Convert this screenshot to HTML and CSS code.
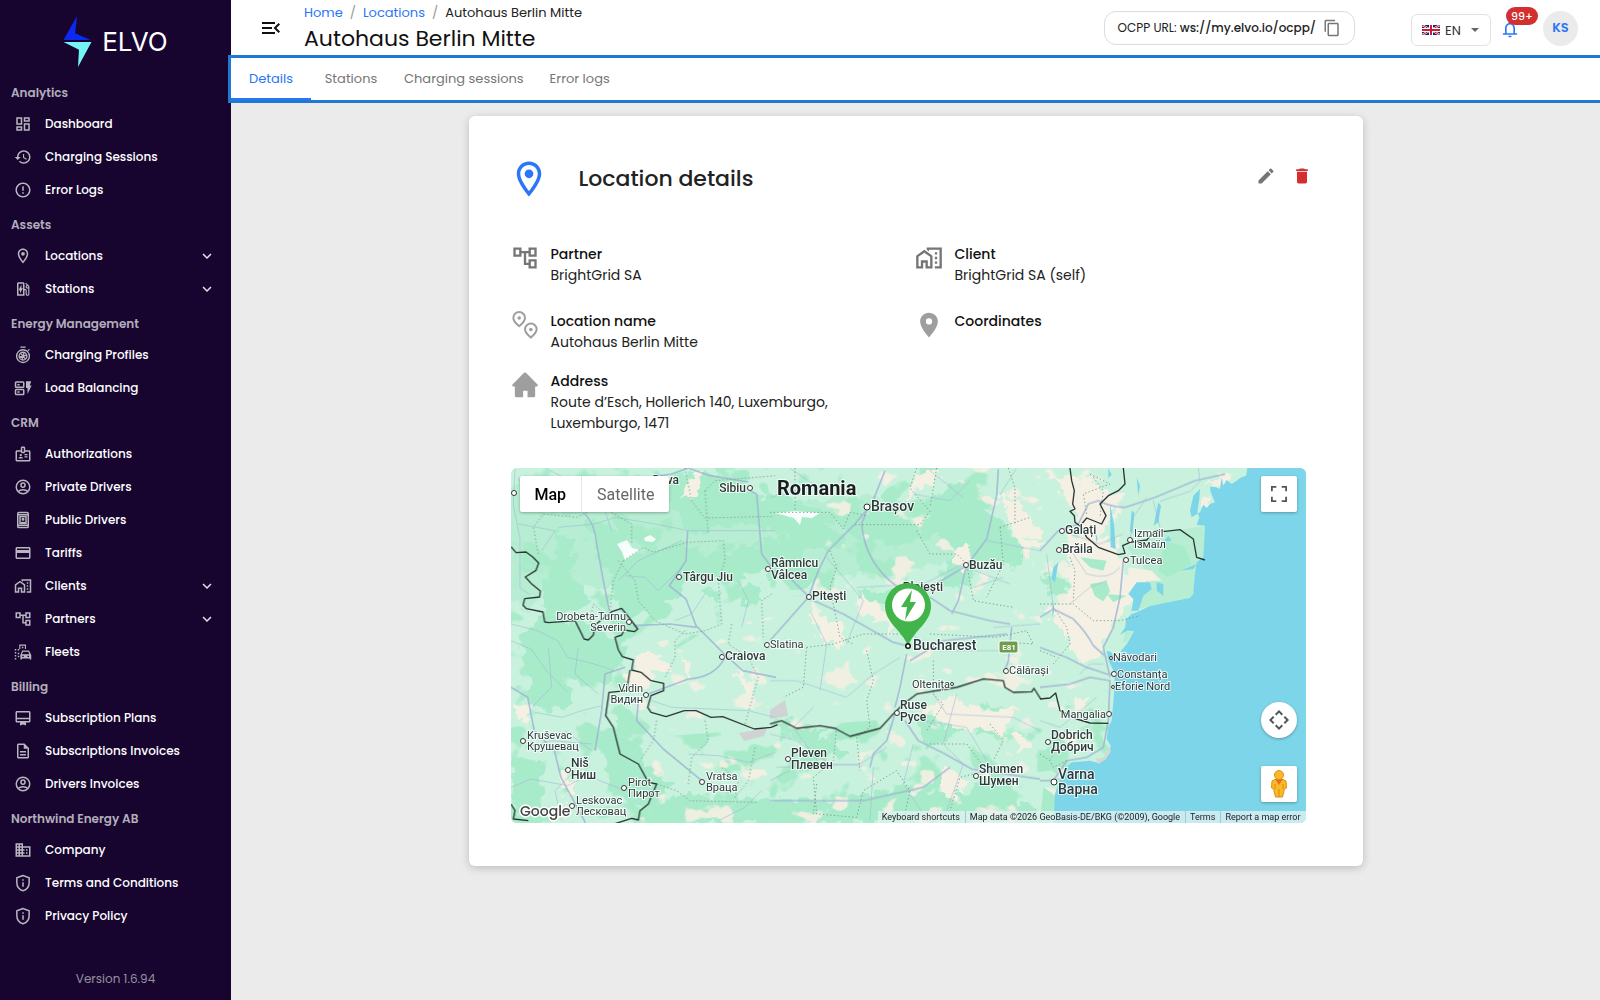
FILE: index.html
```html
<!DOCTYPE html>
<html lang="en">
<head>
<meta charset="utf-8">
<meta name="viewport" content="width=device-width, initial-scale=1">
<title>Autohaus Berlin Mitte - ELVO</title>
<link rel="stylesheet" href="styles.css">
</head>
<body>
<svg class="sprite" aria-hidden="true">
  <symbol id="dashboard" viewBox="0 0 24 24"><path d="M19 5v2h-4V5h4M9 5v6H5V5h4m10 8v6h-4v-6h4M9 17v2H5v-2h4M21 3h-8v6h8V3zM11 3H3v10h8V3zm10 8h-8v10h8V11zm-10 4H3v6h8v-6z"/></symbol>
  <symbol id="history" viewBox="0 0 24 24"><path d="M13 3c-4.97 0-9 4.03-9 9H1l3.89 3.89.07.14L9 12H6c0-3.87 3.13-7 7-7s7 3.13 7 7-3.13 7-7 7c-1.93 0-3.68-.79-4.94-2.06l-1.42 1.42C8.27 19.99 10.51 21 13 21c4.97 0 9-4.03 9-9s-4.03-9-9-9zm-1 5v5l4.28 2.54.72-1.21-3.5-2.08V8H12z"/></symbol>
  <symbol id="error" viewBox="0 0 24 24"><path d="M11 15h2v2h-2zm0-8h2v6h-2zm.99-5C6.47 2 2 6.48 2 12s4.47 10 9.99 10C17.52 22 22 17.52 22 12S17.52 2 11.99 2zM12 20c-4.42 0-8-3.58-8-8s3.58-8 8-8 8 3.58 8 8-3.58 8-8 8z"/></symbol>
  <symbol id="pin" viewBox="0 0 24 24"><path d="M12 2C8.13 2 5 5.13 5 9c0 5.25 7 13 7 13s7-7.75 7-13c0-3.87-3.13-7-7-7zM7 9c0-2.76 2.24-5 5-5s5 2.24 5 5c0 2.88-2.88 7.19-5 9.88C9.92 16.21 7 11.85 7 9z"/><circle cx="12" cy="9" r="2.5"/></symbol>
  <symbol id="pin-solid" viewBox="0 0 24 24"><path d="M12 1.5c-4.2 0-7.6 3.3-7.6 7.4C4.400 14.500 12 22.500 12 22.500s7.600-8 7.600-13.600c0-4.100-3.400-7.400-7.600-7.400zm0 10.100a2.700 2.700 0 1 1 0-5.400 2.700 2.700 0 0 1 0 5.400z"/></symbol>
  <symbol id="station" viewBox="0 0 24 24"><path fill-rule="evenodd" d="M19.77 7.23 16.06 3.500 15 4.560l2.110 2.110c-.94.36-1.610 1.260-1.610 2.330 0 1.380 1.120 2.500 2.500 2.500.36 0 .69-.08 1-.21v7.210c0 .55-.45 1-1 1s-1-.45-1-1V14c0-1.100-.9-2-2-2h-1V5c0-1.100-.9-2-2-2H6c-1.100 0-2 .9-2 2v16h10v-7.500h1.500v5c0 1.380 1.120 2.500 2.500 2.500s2.500-1.120 2.500-2.500V9c0-.69-.28-1.320-.73-1.770zM18 10c-.55 0-1-.45-1-1s.45-1 1-1 1 .45 1 1-.45 1-1 1zM6 5h6v14H6z"/><path d="M8 18v-4.500H6L10 6v5h2z"/></symbol>
  <symbol id="profile" viewBox="0 0 24 24"><g fill="none" stroke="currentColor" stroke-width="1.800"><circle cx="12" cy="13.500" r="8.500"/><circle cx="12" cy="13.500" r="5.200"/><path d="M8.500 1.500h7M18.500 6.500l2-2M12 13.500l1.500-5M12 13.500l5-1.500M12 13.500l3.500 4M12 13.500l-1.500 5M12 13.500l-5 1.500M12 13.500l-3.500-4"/></g></symbol>
  <symbol id="load" viewBox="0 0 24 24"><g fill="none" stroke="currentColor" stroke-width="2"><rect x="2" y="4" width="11" height="7" rx="1"/><rect x="2" y="14" width="11" height="6.500" rx="1"/></g><path d="M4.500 6.500h3v2h-3zM4.500 16.200h3v2h-3zM16 3h7l-2 5.500h2.500L18 20v-8h-2z"/></symbol>
  <symbol id="badge" viewBox="0 0 24 24"><path fill-rule="evenodd" d="M20 7h-5V4c0-1.100-.9-2-2-2h-2c-1.100 0-2 .9-2 2v3H4c-1.100 0-2 .9-2 2v11c0 1.100.9 2 2 2h16c1.100 0 2-.9 2-2V9c0-1.100-.9-2-2-2zm-9-3h2v5h-2V4zm9 16H4V9h5c0 1.100.9 2 2 2h2c1.100 0 2-.9 2-2h5v11z"/><circle cx="9" cy="13.500" r="1.500"/><path d="M11.080 16.180a5.200 5.200 0 0 0-4.160 0c-.56.23-.92.79-.92 1.390V18h6v-.43c0-.6-.36-1.160-.92-1.390zM14 15h4v1.500h-4zM14 12h4v1.500h-4z"/></symbol>
  <symbol id="account" viewBox="0 0 24 24"><g fill="none" stroke="currentColor" stroke-width="2"><circle cx="12" cy="12" r="9"/><circle cx="12" cy="9.500" r="2.700"/><path d="M5.500 18c1.700-1.700 4-2.500 6.500-2.500s4.800.8 6.500 2.500"/></g></symbol>
  <symbol id="idcard" viewBox="0 0 24 24"><g fill="none" stroke="currentColor" stroke-width="2"><rect x="5" y="2" width="14" height="20" rx="1.500"/><path d="M5 5h14M5 19h14"/><rect x="8" y="7.500" width="8" height="9"/><circle cx="12" cy="11" r="1"/><path d="M9 15.500h6"/></g></symbol>
  <symbol id="card" viewBox="0 0 24 24"><path d="M20 4H4c-1.110 0-1.990.89-1.990 2L2 18c0 1.110.89 2 2 2h16c1.110 0 2-.89 2-2V6c0-1.110-.89-2-2-2zm0 14H4v-6h16v6zm0-10H4V6h16v2z"/></symbol>
  <symbol id="homework" viewBox="0 0 24 24"><path d="M17 7h2v2h-2zM17 11h2v2h-2zM17 15h2v2h-2zM10 3v1.970l2 1.430V5h9v14h-4v2h6V3zM8 5l-7 5v11h6v-5h2v5h6V10zm5 14h-2v-5H5v5H3v-7.970l5-3.570 5 3.570z"/></symbol>
  <symbol id="tree" viewBox="0 0 24 24"><path d="M22 11V3h-7v3H9V3H2v8h7V8h2v10h4v3h7v-8h-7v3h-2V8h2v3h7zM7 9H4V5h3v4zm10 6h3v4h-3v-4zm0-10h3v4h-3V5z"/></symbol>
  <symbol id="fleet" viewBox="0 0 24 24"><path d="M1 8h2v2H1zM1 12h2v2H1zM1 16h2v2H1zM1 20h2v2H1zM5 8h2v2H5zM7 2h9v6h-1.500V3.500h-6V8H7zM10.500 5h2v2h-2zM5 13h2v2H5zM5 17h2v2H5z"/><path fill-rule="evenodd" d="M11 10h9l3 6v6h-2v-1.500H10.500V22h-2v-6zm1 1.800L10.500 15h10L19 11.800zM11 17v1.500h2V17zm7 0v1.500h2V17z"/></symbol>
  <symbol id="plan" viewBox="0 0 24 24"><path fill-rule="evenodd" d="M20 2.500H4c-1.110 0-2 .89-2 2v11.500c0 1.110.89 2 2 2h4V22l4-1.500 4 1.500v-4h4c1.110 0 2-.89 2-2V4.500c0-1.110-.89-2-2-2zM20 16H4v-2.500h16zm0-4.500H4v-7h16z"/></symbol>
  <symbol id="doc" viewBox="0 0 24 24"><path d="M8 16h8v2H8zm0-4h8v2H8zm6-10H6c-1.100 0-2 .9-2 2v16c0 1.100.89 2 1.990 2H18c1.100 0 2-.9 2-2V8l-6-6zm4 18H6V4h7v5h5v11z"/></symbol>
  <symbol id="business" viewBox="0 0 24 24"><path d="M12 7V3H2v18h20V7H12zM6 19H4v-2h2v2zm0-4H4v-2h2v2zm0-4H4V9h2v2zm0-4H4V5h2v2zm4 12H8v-2h2v2zm0-4H8v-2h2v2zm0-4H8V9h2v2zm0-4H8V5h2v2zm10 12h-8v-2h2v-2h-2v-2h2v-2h-2V9h8v10zm-2-8h-2v2h2v-2zm0 4h-2v2h2v-2z"/></symbol>
  <symbol id="shield" viewBox="0 0 24 24"><path fill="none" stroke="currentColor" stroke-width="2" d="M12 2 3.800 5v6.500c0 5 3.500 9.300 8.200 10.800 4.700-1.500 8.200-5.800 8.200-10.800V5z"/><path d="M11 7h2v2h-2zM11 11h2v6h-2z"/></symbol>
  <symbol id="chevron" viewBox="0 0 24 24"><path d="M7.410 8.590 12 13.170l4.590-4.580L18 10l-6 6-6-6z"/></symbol>
  <symbol id="menu" viewBox="0 0 24 24"><path d="M3 18h13v-2H3v2zm0-5h10v-2H3v2zm0-7v2h13V6H3zm18 9.590L17.420 12 21 8.410 19.590 7l-5 5 5 5L21 15.590z"/></symbol>
  <symbol id="copy" viewBox="0 0 24 24"><path d="M16 1H4c-1.100 0-2 .9-2 2v14h2V3h12V1zm3 4H8c-1.100 0-2 .9-2 2v14c0 1.100.9 2 2 2h11c1.100 0 2-.9 2-2V7c0-1.100-.9-2-2-2zm0 16H8V7h11v14z"/></symbol>
  <symbol id="bell" viewBox="0 0 24 24"><path d="M12 22c1.100 0 2-.9 2-2h-4c0 1.100.9 2 2 2zm6-5v-6c0-3.070-1.630-5.640-4.500-6.320V4c0-.83-.67-1.500-1.500-1.500s-1.500.67-1.500 1.500v.68C7.640 5.360 6 7.920 6 11v6H3.500v2h17v-2H18zm-2 0H8v-6c0-2.480 1.510-4.500 4-4.500s4 2.020 4 4.500v6z"/></symbol>
  <symbol id="edit" viewBox="0 0 24 24"><path d="M3 17.250V21h3.750L17.810 9.940l-3.750-3.750L3 17.250zM20.710 7.040c.39-.39.39-1.020 0-1.410l-2.340-2.340c-.39-.39-1.020-.39-1.410 0l-1.830 1.830 3.750 3.750 1.830-1.830z"/></symbol>
  <symbol id="delete" viewBox="0 0 24 24"><path d="M6 19c0 1.100.9 2 2 2h8c1.100 0 2-.9 2-2V7H6v12zM19 4h-3.500l-1-1h-5l-1 1H5v2h14V4z"/></symbol>
  <symbol id="house" viewBox="0 0 24 24"><path d="M12 1.200a1 1 0 0 1 .8.300L22.500 11.400c.9.900.6 1.800-.6 1.800h-1.200v8.300c0 .6-.4 1-1 1h-5.500V17h-3.800v5.500H4.300c-.6 0-1-.4-1-1v-8.300H2.100c-1.200 0-1.500-.9-.6-1.800l9.700-9.900a1 1 0 0 1 .8-.300z"/></symbol>
  <symbol id="pins" viewBox="0 0 24 24"><g fill="none" stroke="currentColor" stroke-width="1.700"><path d="M7 1.900a5 5 0 0 0-5 5c0 3.200 3.200 5.300 5 7.100 1.800-1.800 5-3.900 5-7.100a5 5 0 0 0-5-5zM17 11.700a5 5 0 0 0-5 5c0 3.200 3.200 5.300 5 7.100 1.800-1.800 5-3.900 5-7.100a5 5 0 0 0-5-5z" transform="translate(0 -1)"/></g><circle cx="7" cy="6" r="1.500"/><circle cx="17" cy="15.800" r="1.500"/></symbol>
</svg>

<div class="app">
  <aside class="sidebar">
    <a class="logo" href="#" aria-label="ELVO">
      <svg class="logo-mark" viewBox="0 0 30 54" aria-hidden="true"><path fill="#0b28f5" d="M14 0 0 25h28L12 18z"/><path fill="#74f4f4" d="M0 27h29L15 53l1-18z"/></svg>
      <span class="logo-text">ELVO</span>
    </a>
    <nav class="nav">
      <h2>Analytics</h2>
      <a href="#"><svg><use href="#dashboard"/></svg>Dashboard</a>
      <a href="#"><svg><use href="#history"/></svg>Charging Sessions</a>
      <a href="#"><svg><use href="#error"/></svg>Error Logs</a>
      <h2>Assets</h2>
      <a href="#"><svg><use href="#pin"/></svg>Locations<svg class="more"><use href="#chevron"/></svg></a>
      <a href="#"><svg><use href="#station"/></svg>Stations<svg class="more"><use href="#chevron"/></svg></a>
      <h2>Energy Management</h2>
      <a href="#"><svg><use href="#profile"/></svg>Charging Profiles</a>
      <a href="#"><svg><use href="#load"/></svg>Load Balancing</a>
      <h2>CRM</h2>
      <a href="#"><svg><use href="#badge"/></svg>Authorizations</a>
      <a href="#"><svg><use href="#account"/></svg>Private Drivers</a>
      <a href="#"><svg><use href="#idcard"/></svg>Public Drivers</a>
      <a href="#"><svg><use href="#card"/></svg>Tariffs</a>
      <a href="#"><svg><use href="#homework"/></svg>Clients<svg class="more"><use href="#chevron"/></svg></a>
      <a href="#"><svg><use href="#tree"/></svg>Partners<svg class="more"><use href="#chevron"/></svg></a>
      <a href="#"><svg><use href="#fleet"/></svg>Fleets</a>
      <h2>Billing</h2>
      <a href="#"><svg><use href="#plan"/></svg>Subscription Plans</a>
      <a href="#"><svg><use href="#doc"/></svg>Subscriptions Invoices</a>
      <a href="#"><svg><use href="#account"/></svg>Drivers Invoices</a>
      <h2>Northwind Energy AB</h2>
      <a href="#"><svg><use href="#business"/></svg>Company</a>
      <a href="#"><svg><use href="#shield"/></svg>Terms and Conditions</a>
      <a href="#"><svg><use href="#shield"/></svg>Privacy Policy</a>
    </nav>
    <p class="version">Version 1.6.94</p>
  </aside>

  <div class="content">
    <header class="topbar">
      <button class="menu" type="button" aria-label="Collapse menu"><svg><use href="#menu"/></svg></button>
      <div class="heading">
        <nav class="crumbs" aria-label="Breadcrumb"><a href="#">Home</a><i>/</i><a href="#">Locations</a><i>/</i><span>Autohaus Berlin Mitte</span></nav>
        <h1>Autohaus Berlin Mitte</h1>
      </div>
      <div class="ocpp"><span>OCPP URL: <b>ws://my.elvo.io/ocpp/</b></span><button type="button" aria-label="Copy URL"><svg><use href="#copy"/></svg></button></div>
      <label class="lang">
        <svg class="flag" viewBox="0 0 18 10" role="img" aria-label="Language"><path fill="#0b2a6b" d="M0 0h18v10H0z"/><path stroke="#fff" stroke-width="2" d="m0 0 18 10M18 0 0 10"/><path stroke="#cf1b34" d="m0 0 18 10M18 0 0 10"/><path stroke="#fff" stroke-width="4" d="M9 0v10M0 5h18"/><path stroke="#cf1b34" stroke-width="2" d="M9 0v10M0 5h18"/></svg>
        <select><option>EN</option><option>DE</option></select>
        <svg class="caret" viewBox="0 0 8 4" aria-hidden="true"><path d="M0 0h8L4 4z"/></svg>
      </label>
      <button class="alerts" type="button" aria-label="Notifications"><svg><use href="#bell"/></svg><span class="count">99+</span></button>
      <button class="avatar" type="button">KS</button>
    </header>

    <div class="tabs" role="tablist">
      <button type="button" role="tab" aria-selected="true">Details</button>
      <button type="button" role="tab">Stations</button>
      <button type="button" role="tab">Charging sessions</button>
      <button type="button" role="tab">Error logs</button>
    </div>

    <main>
      <section class="card">
        <div class="card-head">
          <svg class="card-icon"><use href="#pin"/></svg>
          <h2>Location details</h2>
          <button type="button" aria-label="Edit"><svg><use href="#edit"/></svg></button>
          <button type="button" class="danger" aria-label="Delete"><svg><use href="#delete"/></svg></button>
        </div>
        <dl class="fields">
          <div class="field org"><svg><use href="#tree"/></svg><div><dt>Partner</dt><dd>BrightGrid SA</dd></div></div>
          <div class="field org"><svg><use href="#homework"/></svg><div><dt>Client</dt><dd>BrightGrid SA (self)</dd></div></div>
          <div class="field"><svg><use href="#pins"/></svg><div><dt>Location name</dt><dd>Autohaus Berlin Mitte</dd></div></div>
          <div class="field"><svg><use href="#pin-solid"/></svg><div><dt>Coordinates</dt><dd></dd></div></div>
          <div class="field"><svg><use href="#house"/></svg><div><dt>Address</dt><dd>Route d’Esch, Hollerich 140, Luxemburgo, Luxemburgo, 1471</dd></div></div>
        </dl>

        <div class="map">
          <svg class="map-art" viewBox="0 0 795 355" preserveAspectRatio="xMidYMid slice" role="img" aria-label="Map of southern Romania and northern Bulgaria">
            <defs>
              <filter id="rough" x="0" y="0" width="1" height="1" color-interpolation-filters="sRGB"><feTurbulence type="fractalNoise" baseFrequency=".08" numOctaves="3" seed="4"/><feDisplacementMap in="SourceGraphic" scale="20" xChannelSelector="R" yChannelSelector="G"/></filter>
              <filter id="patches" x="0" y="0" width="1" height="1" color-interpolation-filters="sRGB"><feTurbulence type="fractalNoise" baseFrequency=".03 .036" numOctaves="3" seed="11"/><feColorMatrix values="0 0 0 0 .66  0 0 0 0 .92  0 0 0 0 .79  0 14 0 0 -7.900"/><feComposite operator="in" in2="SourceAlpha"/></filter>
              <filter id="fields" x="0" y="0" width="1" height="1" color-interpolation-filters="sRGB"><feTurbulence type="fractalNoise" baseFrequency=".035 .045" numOctaves="3" seed="31"/><feColorMatrix values="0 0 0 0 .96  0 0 0 0 .94  0 0 0 0 .89  14 0 0 0 -8.900"/><feComposite operator="in" in2="SourceAlpha"/></filter>
            </defs>
            <rect width="795" height="355" fill="#c8f2de"/>
            <g filter="url(#rough)" fill="#a8ebcb">
              <rect width="795" height="355" fill="none"/>
              <path fill="#b7eed3" d="M15 10h140l50 20 180 0 60 10 10 50-90 20-120-10-100 10-50 10-60-5-15 25-50-10-30-40-20-20z"/>
              <path d="M45 60l20 10-5 40 20 25-30 15-20-15 10-35zM75 50l35 10 15 25 50-10 35 15 45-20 25 5 35 40-35 5-30-15-70 5-30 30-35 10-25-60zM165 5l45 5 40 20 25-5 50 35-35 10-60-15-50 10-20-25zM330 48l40-8 35 15 30-40 30 5 25 35 30 25-20 20-50-10-20-25-40 15-35-10-25-5zM270 28l30 15 35 30-20 10-40-15zM60 20l25 5-10 20-35 0z"/>
              <path d="M30 150l50 5 40 25-20 35-30 0-25-15-30 5-5-35zM20 190l30 10 10 35-15 10-30-10zM85 265l25-10 25 40 25 20-20 30-40-20zM0 290l30 5 5 45-30 5zM165 325l60 5 70 5 100-15 100 10 45 15v10H120zM470 235l25 10-5 30-25-10zM405 245l30 10 0 20-20 5zM265 250l50 10-5 15-40-5zM530 105l25 5 0 20-20-5z"/>
              <path d="M230 120l15-5 5 15-15 10zM190 120l20 5-5 12zM345 120l20 5 30-5-10 15-35 0zM440 85l25 15-10 20-25-5zM285 270l45 5 10 10-30 5zM430 330l50-15 30 15-20 20z"/>
            </g>
            <path filter="url(#patches)" d="M0 0h490v120L250 130 150 190 140 355H0zM130 270l660-50v135H120z"/>
            <path filter="url(#fields)" opacity=".9" d="M320 0h275v355H120V180l180-40z"/>
            <g filter="url(#rough)" fill="#f5f0e4">
              <rect width="795" height="355" fill="none"/>
              <path d="M175 12l20-5-10 20-15 5zM410 3h20l-25 25-10 0zM490 25l20 10 20 30-25 10zM505 70l30 5-20 15zM440 80l20 0-5 20-15-5zM345 125l45 20-8 20-15-15-20-5zM300 145l35 10-5 25-25-10zM125 190l10-8 15 5 10 15-35 10zM166 190l18 5-5 12zM117 203l25 12-12 8-15-10zM225 205l18 12-5 15zM5 240l15-5-5 25zM45 305l15 0 5 25-10 0zM410 240l30-10 50 15 20-5-20 25-50-5zM430 295l25 15-10 25-15-15zM500 265l20 5-10 15z"/>
              <path d="M545 10l40 0 10 20-20 30-20-20zM555 65l50 10 10 30 20 5-30 45-20 40-15 0-20-35-20-20 25-5 5-25zM560 155l30 0 0 35-20-10zM580 25h35l-20 40-15 15-10-30zM695 15l20-10 0 12zM690 30l12-5-5 20zM560 230l20 0-10 12z"/>
            </g>
            <g fill="#fff" opacity=".9"><path d="M106 76l10-4 5 8 8 2-15 10-3-8zM133 70l6-3 6 4-3 3-8-1zM264 45l20-2 25 2-8 5-10-1-2 8-6-7z"/></g>
            <path fill="#d0d3d3" d="M228 265l28-5-3 8-20 5zM259 242l15-10 3 16-18 3z"/>
            <g transform="scale(.33333) translate(1587 -22)">
              <path fill="#b7eed3" d="M260 260 375 215l120-20-5 100-20 10-10 110-130 20-60 20 20-40 50-60z"/>
              <path fill="#f5f0e4" d="M265 320l70 10 30 30-50 0-30 60-20 10z"/>
              <path fill="#7dd5ea" d="M622 22L618 45 600 52 590 60 575 70 560 58 550 75 545 50 540 85 528 80 510 78 512 95 525 125 510 130 500 142 490 132 480 155 455 170 450 150 460 105 480 85 478 115 472 155 478 170 470 192 495 195 490 290 470 305 464 345 460 400 450 412 400 422 330 436 290 455 275 460 258 475 256 500 240 522 262 510 282 511 262 548 240 575 228 600 214 575 200 570 206 600 225 640 222 700 215 780 205 800 200 835 212 855 208 880 178 908 150 900 95 905 80 920 62 950 45 1000 40 1089 800 1089 800 22z"/>
              <path fill="#b7eed3" d="M255 515l25-5-20 32-12 5z"/>
              <path fill="#7dd5ea" d="M210 130l12 60 5 75-15-5zM290 50l10 25-5 30zM270 210l5-60 8 5-6 65zM355 125l8 10-8 50-14 10zM165 205l8 30-4 10zM290 365l40 0 5 20-25 20-15 45-20 0 5-35-15-15zM370 245l15-20 10 15zM395 265l30 5-25 10zM420 330l50-20-10 15zM40 320l15-15-10 60-10-10zM38 420l5 30-6 20zM350 365l20 5 0 35-20-15zM390 300l12 12-12 2zM205 22l10 20-10 10z"/>
              <path fill="#a8ebcb" d="M375 240l60 20 20 50-70 40-30-20zM150 370l50-8 10 30-20 30-25-15zM200 400l60 5-40 20zM120 290l80 10-10 30-40-10zM20 920l40-30-10 50zM10 980l30 20-5 89H0z"/>
              <path fill="#d5d9d3" d="M205 860l8 10-15 25-22 15-10-15 25-5z"/>
            </g>
            <g class="roads" transform="scale(.33333)">
              <g transform="translate(-18 -22)">
                <path class="major" d="M240 160q30 30 35 90l20 110 18 90M548 210l-5 90-50 75 50 40 30 80 80 80 60 55 100 20M660 590q-30 60-110 65l-120 45M385 495l110-5 80 10M18 680l50 30 20 100 60 60 20 80 70 130 20 60M270 870l20-120 10-110 60-20M400 720l-5 60 80 85 115 95M735 90l20 10 15 180 30 40M430 50l70-10 50-18 60 22 120 20"/>
                <path d="M18 490l80 20 60 30 30 50 80 20 60 20M18 540l60 25 50 70 60 60M160 200l110-10 60-20 120 20 100 20 260 0M340 360l60-60 130-60M360 345l60 5 40 40 60-60M90 755l80 15 60-20 60-15M60 860l80-20 120 10M18 980l60-25 110 20 60-30 100 40M120 22l60 30 100 10M40 190l110 20-40 60M550 880l90 5 90 20 80-30M30 22l-5 110 20 100v150l30 20M440 720l60 20 230 10 80 20M640 1080l80-40 50-50M600 400l-40 60-50 20M700 360l30 60-20 80M130 560l10 120-60 60M220 560l-10 80 70 60M180 810l80 60M300 150l20 60M210 930l-60 60 20 90"/>
              </g>
              <g transform="translate(777 -22)">
                <path class="major" d="M0 540l115-130 30-80 30-60 80-80 50-60 40-100M118 410l-60-60-58-20M120 415l100 45 150 85 40 10M290 150l-15 40q10 120 110 190l20 10M480 410l60 40 120 30 60 10M545 460l20-40 25-110M480 380l110-65 60-80 30-130 5-80M410 580l-20 100-15 60M405 780l40 60 80 40 80 45 205 30M0 1020l280 0 180-40 80-60M725 500l-10 100-10 30M420 600l100-60 190-20M300 920l10-40 40-40 25-80"/>
                <path d="M0 110l120-30M60 22l100 70M0 660h80l150 50 80-70 80-50M170 290l110 130-50 130M120 450l50 100-20 140M260 380l200-10 120-60M420 520l90 50 200 0M600 60l-60 60-110-20M650 240l160 30M810 490l-140 10M0 820l80 20 100 70 100 5M350 860l-80 50-250 10M130 740l-60 60 80 110M490 700l40 60 200 10 80 40M430 850l-30 120 60 90M560 700l-40 150 60 60-50 140M310 920l-10 160M700 350l-90 30M590 320l130 50M740 22l-50 80M480 30l100 80M460 780l130 20 60 100M0 960l60-30"/>
              </g>
              <g transform="translate(1587 -22)">
                <path class="major" d="M0 470l40-25 60 30q40 40 60 80l40 35M0 270l55-60 60-20 30-60 30-10q40 20 80 20l90-30 120-50 90-20M250 300l-10 110-20 90-30 60 20 90M0 560l80 30 60 30 60 20h20M0 680l90-10 60-20 60 10-5 120-15 80-50 30-60 10-40 60H0"/>
                <path d="M475 22l5 40-30 30-90 30M320 110l-40 60-10 70M80 250l60 90q70 20 100-20M60 210l120 40 70-30M0 960l60-5M120 640l30-30 40 0M90 430l60-50 50-20M40 440l-20-160M0 780l60 20 110-90M30 900l50-100M340 120l20 80"/>
              </g>
            </g>
            <g class="regions" transform="scale(.33333)">
              <g transform="translate(-18 -22)"><path d="M100 280l-15-80 30-40 100 10 40-20M310 150l70 40 0 60M355 300l60-40 30 15 100-30 110-5 5 60-20 60 10 130-50 20-60 10-90-40-50-60-10-60-50-60M355 300l-30 60-10 90 10 30-60-50-10 50 20 40M600 90l30-30 180-15M600 90l10 130M540 22l20 100 40 50 200-5M680 490l-10 60 60 40 30 60-40 140M540 510l-30 30 0 50-30 60M750 860l-20 100-40 50 10-50-50-40M455 780l-10 60-40 60M600 780l10 60-50 50-10 80M455 970l60 20 40 30 200 5M800 400l-30 20 5 110"/></g>
              <g transform="translate(777 -22)"><path d="M75 22l0 130M0 155l180 0 40 50 20-50 50 10M180 270l20 50-20 60 30 150 40 20M440 22l-20 60 60 70-30 40-200 0M440 210l40 70 80 0 30 30 20 110 120 20M500 22l-20 120M715 22l20 60 0 110M690 200l90-30M690 200l10 110-50 100M110 560l-10 120-60 30M110 560l80-10 90-30 130 0M290 570l20 90-20 60 10 80-40 30 10 100M480 520l200 10 90-20 20 40-80-5M490 600l0 100 30 30-50 80M200 800l-10 100-60 50 10 110 120 10 20-80 100-60 40 60-20 90 60 10M480 850l110 0 60 80-80 20-30 100M660 790l40 50-30 60M140 970l-10 90"/></g>
              <g transform="translate(1587 -22)"><path d="M0 430l100 0 60 50 80 0 60-15M40 440l40 60 10 50-50 60M90 290l15 40-5 90M150 40l60 30-80 30 10 60M160 50l30 40-10 80M0 880l30 20 10 20 40-20M0 570l50 20"/></g>
            </g>
            <g class="border" transform="scale(.33333)">
              <g transform="translate(-18 -22)"><path d="M18 258l15 18 30-2 20 15 18 18-8 22-32 20 20 22 25 20-2 18-45 5-5 20 10 10 50 10 5 30 12 2 79-6 15 30 12 25 13 3 15-15 5-30 50-40 30-10 24 30 24 32-10 8-30-5-8 15-20 7 10 38 12 20 33 10-5 30 28 7 30 25 38 8 0 22-38 15-10 35 10 15 45 13 55-18 35 0 45 20 35-2 95 37 50-5 20-8M375 628l-10 62-53 5-10 70 23 35 20 80 55 30 30 55 25 5-25 60-25 20-5 28-20-5-50 16M18 1030l12 20-5 25 45 5"/></g>
              <g transform="translate(777 -22)"><path d="M0 790l35-10 45 23 70-8 45 8 45 24 90-24 35-38 35-35 40-30 120-20 80-25 60 5 5 20 25 15 55-2 7-10 20 32"/></g>
              <g transform="translate(1587 -22)"><path d="M0 715l30-3 17-15 13 53 50 25 40 12 55 1M90 22l5 38 8 30-5 40 7 15-15 7 13 13 2 20 20 15 15 30 35 30 60 22 20-4-7-23 22-10 50-7 25-28 30 2 45-5 40 28 10 55 25 8M125 190l15-18 45 18 13-25-18-35 25-25 30-15 20-20-5-48"/></g>
            </g>
            <g class="dots"><circle cx="3" cy="25" r="2.500"/><circle cx="239" cy="20" r="2.500"/><circle cx="168" cy="109" r="2.500"/><circle cx="118" cy="154" r="2.500"/><circle cx="211" cy="189" r="2.500"/><circle cx="135" cy="227" r="2.500"/><circle cx="12" cy="273" r="2.500"/><circle cx="57" cy="302" r="2.500"/><circle cx="113" cy="320" r="2.500"/><circle cx="61" cy="338" r="2.500"/><circle cx="191" cy="314" r="2.500"/><circle cx="356" cy="39" r="3"/><circle cx="257" cy="101" r="2.500"/><circle cx="455" cy="97" r="2.500"/><circle cx="298" cy="129" r="2.500"/><circle cx="256" cy="177" r="2.500"/><circle cx="495" cy="203" r="2.500"/><circle cx="386" cy="245" r="2.500"/><circle cx="277" cy="291" r="2.500"/><circle cx="465" cy="308" r="2.500"/><circle cx="551" cy="63" r="2.500"/><circle cx="548" cy="82" r="2.500"/><circle cx="619" cy="72" r="2.500"/><circle cx="615" cy="92" r="2.500"/><circle cx="600" cy="190" r="1.500"/><circle cx="603" cy="206" r="2.500"/><circle cx="602" cy="219" r="1.500"/><circle cx="598" cy="246" r="2.500"/><circle cx="537" cy="274" r="2.500"/><circle cx="543" cy="314" r="3"/><circle cx="441" cy="216" r="1.500"/></g>
            <g class="towns">
              <text x="168" y="16" text-anchor="end">Deva</text><text x="235" y="24" text-anchor="end">Sibiu</text>
              <text x="172" y="113">Târgu Jiu</text><text x="214" y="192">Craiova</text>
              <text x="60" y="299">Niš</text><text x="60" y="311">Ниш</text>
              <text x="260" y="99">Râmnicu</text><text x="260" y="111">Vâlcea</text>
              <text x="458" y="101">Buzău</text><text x="301" y="132">Pitești</text><text x="432" y="123" text-anchor="end">Ploiești</text>
              <text x="389" y="241">Ruse</text><text x="389" y="253">Русе</text><text x="280" y="289">Pleven</text><text x="280" y="301">Плевен</text>
              <text x="468" y="305">Shumen</text><text x="468" y="317">Шумен</text><text x="554" y="66">Galați</text><text x="551" y="85">Brăila</text>
              <text x="540" y="271">Dobrich</text><text x="540" y="283">Добрич</text>
            </g>
            <g class="towns small">
              <text x="115" y="152" text-anchor="end">Drobeta-Turnu</text><text x="115" y="163" text-anchor="end">Severin</text>
              <text x="132" y="224" text-anchor="end">Vidin</text><text x="132" y="235" text-anchor="end">Видин</text>
              <text x="16" y="271">Kruševac</text><text x="16" y="282">Крушевац</text><text x="117" y="318">Pirot</text><text x="117" y="329">Пирот</text>
              <text x="65" y="336">Leskovac</text><text x="65" y="347">Лесковац</text><text x="195" y="312">Vratsa</text><text x="195" y="323">Враца</text>
              <text x="259" y="180">Slatina</text><text x="498" y="206">Călărași</text><text x="401" y="220">Oltenița</text>
              <text x="623" y="69">Izmail</text><text x="623" y="80">Ізмаїл</text><text x="619" y="96">Tulcea</text><text x="602" y="193">Năvodari</text>
              <text x="606" y="210">Constanța</text><text x="604" y="222">Eforie Nord</text><text x="595" y="250" text-anchor="end">Mangalia</text>
            </g>
            <g class="towns city"><text x="360" y="43">Brașov</text><text x="402" y="182">Bucharest</text><text x="547" y="311">Varna</text><text x="547" y="326">Варна</text></g>
            <text class="country" x="266" y="27">Romania</text>
            <text class="brand" x="9" y="348">Google</text>
            <rect x="488" y="173" width="19" height="12" rx="2" fill="#6f9c4c" stroke="#fff"/><text class="road-no" x="498" y="182" text-anchor="middle">E81</text>
            <path fill="#41b549" d="M397 178c-6-16-23-23-23-40a23 23 0 0 1 46 0c0 17-17 24-23 40z"/><circle cx="397.500" cy="137" r="16.500" fill="#fff"/><path fill="#41b549" d="m401 122-11 17h6l-2 13 11-18h-6z"/>
            <circle cx="397" cy="178" r="3" fill="#111"/><circle cx="397" cy="178" r="1.500" fill="#fff"/>
          </svg>
          <div class="map-type"><button type="button" aria-pressed="true">Map</button><button type="button">Satellite</button></div>
          <button class="map-btn fullscreen" type="button" aria-label="Toggle fullscreen"><svg viewBox="0 0 18 18"><path d="M0 0v6h2V2h4V0zM16 0h-4v2h4v4h2V0zM16 16h-4v2h6v-6h-2zM2 12H0v6h6v-2H2z"/></svg></button>
          <div class="map-tools">
            <button class="map-btn round" type="button" aria-label="Map camera controls"><svg viewBox="0 0 20 20"><path d="M10 0 6 4l1.400 1.400L10 2.800l2.600 2.600L14 4zM20 10l-4-4-1.400 1.400 2.600 2.600-2.600 2.600L16 14zM10 20l4-4-1.400-1.400-2.600 2.600-2.600-2.600L6 16zM0 10l4 4 1.400-1.400L2.800 10l2.600-2.600L4 6z"/></svg></button>
            <button class="map-btn" type="button" aria-label="Street View"><svg class="pegman" viewBox="0 0 16 28"><path fill="#fbb829" stroke="#d99010" d="M4 9.500 1 11l-.5 7 2.500 1.500V21l1.500 6h7l1.500-6v-1.500l2.500-1.500-.5-7-3-1.500z"/><path fill="#e6711b" d="M4 9h8l-4 6z"/><path stroke="#d98a10" d="M8 19v8M4 14v5M12 14v5"/><circle cx="8" cy="5" r="4.500" fill="#fbb829" stroke="#d99010"/></svg></button>
          </div>
          <div class="map-legal"><button type="button">Keyboard shortcuts</button><span>Map data ©2026 GeoBasis-DE/BKG (©2009), Google</span><a href="#">Terms</a><a href="#">Report a map error</a></div>
        </div>
      </section>
    </main>
  </div>
</div>
</body>
</html>
```
FILE: styles.css
```css
* { box-sizing: border-box; }
body { margin: 0; font-family: Poppins, Inter, sans-serif; font-size: 13px; color: #222; background: #ebebeb; }
svg { display: block; fill: currentColor; flex: none; }
button { font: inherit; color: inherit; border: 0; padding: 0; background: none; cursor: pointer; }
a { text-decoration: none; }
h1, h2, p, dl, dd { margin: 0; }
.sprite { position: absolute; width: 0; height: 0; }

.app { display: grid; grid-template-columns: 231px minmax(0, 1fr); min-height: 100vh; }

/* Sidebar */
.sidebar { display: flex; flex-direction: column; background: #170530; color: #fff; }
.logo { display: flex; align-items: center; justify-content: center; gap: 9px; height: 74px; padding-top: 10px; color: #fff; }
.logo-mark { width: 30px; height: 52px; }
.logo-text { font-family: Inter, sans-serif; font-size: 26px; line-height: 32px; }
.nav { display: flex; flex-direction: column; }
.nav h2 { height: 33px; padding: 5px 11px 0; font-size: 12px; line-height: 27px; font-weight: 600; color: #b3aeba; }
.nav a { display: flex; align-items: center; gap: 13px; height: 33px; padding: 0 15px 0 14px; color: #fff; font-size: 12px; font-weight: 500; }
.nav svg { width: 18px; height: 18px; color: #b9b6bf; }
.nav .more { margin-left: auto; color: #e3e1e6; }
.version { margin-top: auto; padding: 12px 0 11px; font-size: 12px; line-height: 20px; text-align: center; color: #96909f; }

/* Top bar */
.topbar { display: flex; align-items: center; height: 58px; padding: 0 22px 2px 28px; background: #fff; }
.menu svg { width: 24px; height: 24px; color: #111; }
.heading { margin: 0 auto 0 21px; padding-top: 3px; }
.crumbs { display: flex; gap: 7px; line-height: 18px; }
.crumbs a { color: #2b76f7; }
.crumbs i { font-style: normal; color: #999; }
h1 { font-size: 22px; line-height: 33px; font-weight: 400; color: #111; }
.ocpp { display: flex; align-items: center; gap: 7px; height: 34px; margin-right: 56px; padding: 0 13px; border: 1px solid #dcdcdc; border-radius: 12px; font-size: 12px; }
.ocpp b { font-weight: 500; }
.ocpp svg { width: 18px; height: 18px; color: #777; }
.lang { display: flex; align-items: center; width: 80px; height: 32px; margin-top: 4px; padding: 0 11px 0 10px; border: 1px solid #e2e2e2; border-radius: 6px; }
.lang select { flex: 1; min-width: 0; padding: 0 0 0 5px; border: 0; background: none; appearance: none; font: inherit; color: #333; }
.flag { width: 18px; height: 10px; }
.caret { width: 8px; height: 4px; color: #666; }
.alerts { position: relative; margin: 2px 23px 0 9px; color: #2b76f7; }
.alerts svg { width: 20px; height: 20px; }
.count { position: absolute; left: 6px; top: -12px; width: 32px; border-radius: 9px; background: #d32f2f; color: #fff; font-size: 11px; line-height: 18px; font-weight: 500; text-align: center; }
.avatar { width: 35px; height: 35px; border-radius: 50%; background: #ebebeb; color: #2b76f7; font-weight: 600; }

/* Tabs */
.tabs { display: flex; height: 42px; background: #fff; outline: 3px solid #1f78d4; position: relative; }
.tabs button { min-width: 80px; padding: 0 13px; color: #757575; }
.tabs [aria-selected] { color: #2b76f7; box-shadow: inset 0 -2px #2b76f7; }

/* Location card */
main { padding: 16px; }
.card { max-width: 894px; margin: 0 auto; padding: 42px 57px 43px 42px; border-radius: 6px; background: #fff; box-shadow: 0 2px 8px #00000033; }
.card-head { display: flex; align-items: center; margin: 0 0 44px -3px; }
.card-icon { width: 42px; height: 42px; margin-right: 29px; color: #2b76f7; }
.card-head h2 { flex: 1; font-size: 22px; line-height: 32px; font-weight: 500; }
.card-head button { margin: 0 0 6px 16px; color: #757575; }
.card-head button svg { width: 20px; height: 20px; }
.card-head .danger { margin-right: -6px; color: #d32f2f; }
.fields { display: grid; grid-template-columns: 1fr 1fr; column-gap: 13px; margin-bottom: 16px; font-size: 14px; line-height: 21px; }
.field { display: flex; gap: 12px; min-height: 60px; padding-right: 40px; padding-bottom: 18px; }
.field.org { min-height: 67px; }
.field svg { width: 28px; height: 28px; color: #9e9e9e; }
.org svg { color: #757575; }
.field dt { font-weight: 500; color: #111; }

/* Map */
.map { position: relative; height: 355px; border-radius: 6px; overflow: hidden; font-family: Roboto, sans-serif; }
.map-art { width: 100%; height: 100%; }
.roads { fill: none; stroke: #9fb3d3; stroke-width: 2; stroke-linejoin: round; opacity: .8; }
.roads .major { stroke-width: 5; }
.regions { fill: none; stroke: #7f9f93; stroke-width: 3; stroke-dasharray: 4 7; }
.border { fill: none; stroke: #2a3534; stroke-width: 4; stroke-linejoin: round; }
.dots { fill: #fff; stroke: #333; }
.towns { font-size: 12px; font-weight: 500; fill: #2c3a3a; stroke: #ffffffcc; stroke-width: 2px; paint-order: stroke; }
.small { font-size: 11px; font-weight: 400; }
.city { font-size: 14px; }
.country { font-size: 20px; font-weight: 700; fill: #17201f; stroke: #ffffffcc; stroke-width: 2px; paint-order: stroke; }
.brand { font-family: Poppins, Inter, sans-serif; font-size: 14px; font-weight: 500; fill: #444; stroke: #fff; stroke-width: 3px; paint-order: stroke; }
.road-no { font-size: 8px; font-weight: 700; fill: #fff; }
.map-type { position: absolute; left: 9px; top: 8px; display: flex; height: 36px; border-radius: 2px; background: #fff; box-shadow: 0 1px 3px #0000004d; font-size: 16px; color: #666; }
.map-type button { padding: 0 15px; }
.map-type [aria-pressed] { color: #000; font-weight: 500; border-right: 1px solid #e6e6e6; }
.map-btn { display: grid; place-items: center; width: 36px; height: 36px; border-radius: 2px; background: #fff; box-shadow: 0 1px 3px #0000004d; color: #555; }
.map-btn svg { width: 16px; height: 16px; }
.map-btn.round { border-radius: 50%; }
.map-btn.round svg { width: 20px; height: 20px; }
.map-btn .pegman { width: 16px; height: 28px; }
.fullscreen { position: absolute; right: 9px; top: 8px; }
.map-tools { position: absolute; right: 9px; bottom: 21px; display: grid; gap: 28px; }
.map-legal { position: absolute; right: 0; bottom: 0; display: flex; font-size: 9px; line-height: 12px; color: #222; }
.map-legal > * { padding: 0 5px 0 4px; background: #e8f3f4b8; color: inherit; }
.map-legal > * + * { border-left: 1px solid #9ccbd6; }
```
